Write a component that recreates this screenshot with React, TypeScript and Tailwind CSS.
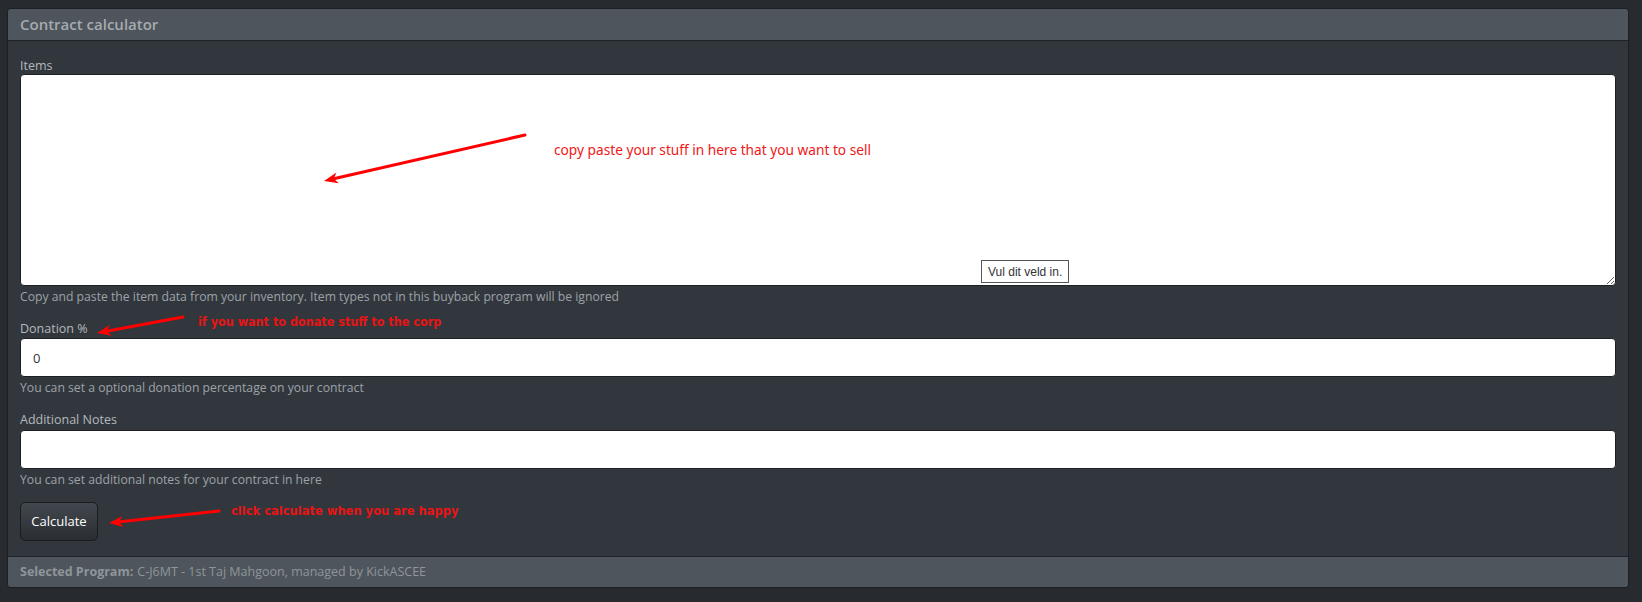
import { useState } from 'react';

const sans = "font-['Open_Sans',_'Noto_Sans',_sans-serif]";

function Arrow({ x1, y1, x2, y2 }: { x1: number; y1: number; x2: number; y2: number }) {
  // line from (x1,y1) to the tip at (x2,y2) with a filled head
  const dx = x2 - x1;
  const dy = y2 - y1;
  const len = Math.hypot(dx, dy);
  const ux = dx / len;
  const uy = dy / len;
  const bx = x2 - ux * 14;
  const by = y2 - uy * 14;
  const nx = -uy * 5.5;
  const ny = ux * 5.5;
  return (
    <g>
      <line x1={x1} y1={y1} x2={bx + ux * 3} y2={by + uy * 3} stroke="#ff0000" strokeWidth={3} strokeLinecap="round" />
      <polygon points={`${x2},${y2} ${bx + nx},${by + ny} ${bx + ux * 4},${by + uy * 4} ${bx - nx},${by - ny}`} fill="#ff0000" />
    </g>
  );
}

export default function App() {
  const [items, setItems] = useState('');
  const [donation, setDonation] = useState('0');
  const [notes, setNotes] = useState('');

  return (
    <div className={`relative min-h-[602px] w-full bg-[#272b30] pt-2 pl-[7px] pr-[13px] ${sans}`}>
      <div className="rounded-[4px] border border-[#1c1f23] bg-[#32373e] overflow-hidden">
        <div className="h-[32px] border-b border-[#1f2226] bg-[#4e555c] px-3 flex items-center">
          <h5 className="text-[15px] font-semibold text-[#a6abb0]">Contract calculator</h5>
        </div>

        <div className="px-3 pt-[15px] pb-[15px]">
          <label className="block text-[12.5px] leading-[18px] text-[#b4b8bc] translate-y-px">Items</label>
          <div className="relative">
            <textarea
              value={items}
              onChange={(e) => setItems(e.target.value)}
              className="block w-full h-[212px] rounded-[4px] border border-[#1c1f23] bg-white px-3 py-2 text-[13px] text-[#333] outline-none"
            />
            {/* browser validation bubble */}
            <div className="absolute left-[961px] top-[186px] h-[23px] border border-[#555] bg-white px-[6px] flex items-center text-[12px] text-[#333] font-['Liberation_Sans',_sans-serif]">
              Vul dit veld in.
            </div>
          </div>
          <p className="mt-[2px] text-[12.2px] leading-[18px] text-[#9da2a7]">
            Copy and paste the item data from your inventory. Item types not in this buyback program will be ignored
          </p>

          <label className="mt-[14px] block text-[12.5px] leading-[18px] text-[#b4b8bc]">Donation %</label>
          <input
            value={donation}
            onChange={(e) => setDonation(e.target.value)}
            className="block w-full h-[39px] rounded-[4px] border border-[#1c1f23] bg-white px-3 text-[13px] text-[#333] outline-none"
          />
          <p className="mt-[2px] text-[12.2px] leading-[18px] text-[#9da2a7]">
            You can set a optional donation percentage on your contract
          </p>

          <label className="mt-[14px] block text-[12.5px] leading-[18px] text-[#b4b8bc]">Additional Notes</label>
          <input
            value={notes}
            onChange={(e) => setNotes(e.target.value)}
            className="mt-px block w-full h-[39px] rounded-[4px] border border-[#1c1f23] bg-white px-3 text-[13px] text-[#333] outline-none"
          />
          <p className="mt-[2px] text-[12.2px] leading-[18px] text-[#9da2a7]">
            You can set additional notes for your contract in here
          </p>

          <button className="mt-[13px] h-[39px] w-[78px] rounded-[5px] border border-[#1a1c1f] bg-gradient-to-b from-[#43484e] to-[#2a2e33] text-[13px] text-white">
            Calculate
          </button>
        </div>

        <div className="h-[31px] border-t border-[#1f2226] bg-[#4e555c] px-3 flex items-center text-[12.5px] text-[#8f959a]">
          <span className="font-bold mr-1">Selected Program:</span>
          C-J6MT - 1st Taj Mahgoon, managed by KickASCEE
        </div>
      </div>

      {/* red annotations drawn over the form */}
      <svg className="pointer-events-none absolute left-0 top-0" width={1642} height={602}>
        <Arrow x1={525} y1={135} x2={324} y2={181} />
        <Arrow x1={183} y1={317} x2={97} y2={333} />
        <Arrow x1={219} y1={511} x2={109} y2={523} />
      </svg>
      <span className="pointer-events-none absolute left-[554px] top-[140px] text-[13.7px] leading-[20px] text-[#f01818] font-['Noto_Sans',_sans-serif]">
        copy paste your stuff in here that you want to sell
      </span>
      <span className="pointer-events-none absolute left-[198px] top-[312px] text-[12.5px] leading-[20px] font-bold text-[#e81414] font-['DejaVu_Sans_Condensed',_'DejaVu_Sans',_sans-serif]">
        if you want to donate stuff to the corp
      </span>
      <span className="pointer-events-none absolute left-[231px] top-[501px] text-[12.8px] leading-[20px] font-bold text-[#e81414] font-['DejaVu_Sans_Condensed',_'DejaVu_Sans',_sans-serif]">
        click calculate when you are happy
      </span>
    </div>
  );
}
